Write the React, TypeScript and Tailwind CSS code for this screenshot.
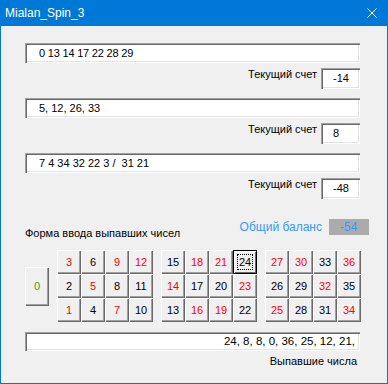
import React from 'react'

const RED = new Set([1, 3, 5, 7, 9, 12, 14, 16, 18, 19, 21, 23, 25, 27, 30, 32, 34, 36])

// three blocks of the roulette table, each 3 rows x 4 columns
const groups: number[][][] = [
  [
    [3, 6, 9, 12],
    [2, 5, 8, 11],
    [1, 4, 7, 10],
  ],
  [
    [15, 18, 21, 24],
    [14, 17, 20, 23],
    [13, 16, 19, 22],
  ],
  [
    [27, 30, 33, 36],
    [26, 29, 32, 35],
    [25, 28, 31, 34],
  ],
]

const bevel =
  'shadow-[inset_1px_1px_0_#ffffff,inset_-1px_-1px_0_#696969,inset_-2px_-2px_0_#a0a0a0]'
const sunken =
  'shadow-[inset_1px_1px_0_#a0a0a0,inset_2px_2px_0_#696969,inset_-1px_-1px_0_#ffffff,inset_-2px_-2px_0_#e3e3e3]'

function NumButton({ n }: { n: number }) {
  const focused = n === 24
  return (
    <div
      className={`relative w-[24px] h-[24px] flex items-center justify-center bg-[#f0f0f0] ${
        focused ? 'border border-black shadow-[inset_1px_1px_0_#ffffff,inset_-1px_-1px_0_#696969]' : bevel
      } ${RED.has(n) ? 'text-[#ff0000]' : 'text-black'}`}
    >
      {focused && <div className="absolute inset-[3px] border border-dotted border-black" />}
      <span className="relative">{n}</span>
    </div>
  )
}

function ScoreBlock({ numbers, score, tight }: { numbers: string; score: string; tight?: boolean }) {
  return (
    <>
      <div className={`h-[20px] w-[335px] bg-white ${sunken} flex items-center pl-[14px] whitespace-pre`}>
        <span className={tight ? 'tracking-[-0.2px]' : ''}>{numbers}</span>
      </div>
      <div className="w-[335px] flex justify-end items-start gap-[4px] mt-[5px]">
        <span className="leading-[12px]">Текущий счет</span>
        <div className={`w-[39px] h-[21px] bg-white ${sunken} flex items-center pl-[12px]`}>{score}</div>
      </div>
    </>
  )
}

export default function App() {
  return (
    <div className="w-[388px] h-[384px] flex flex-col text-[11px] text-black font-['Liberation_Sans',Arial,sans-serif]">
      {/* title bar */}
      <div className="h-[26px] bg-[#0078d7] flex items-center justify-between pl-[5px] pr-[11px] text-white">
        <span className="text-[12px]">Mialan_Spin_3</span>
        <svg width="10" height="10" viewBox="0 0 10 10" className="block">
          <path d="M0.5 0.5 L9.5 9.5 M9.5 0.5 L0.5 9.5" stroke="white" strokeWidth="1" />
        </svg>
      </div>

      <div className="flex-1 bg-[#f0f0f0] border-x border-b border-[#0078d7] pl-[24px] pt-[17px] flex flex-col">
        <ScoreBlock numbers="0 13 14 17 22 28 29" score="-14" tight />
        <div className="mt-[9px]" />
        <ScoreBlock numbers="5, 12, 26, 33" score="8" />
        <div className="mt-[9px]" />
        <ScoreBlock numbers="7 4 34 32 22 3 /  31 21" score="-48" />

        {/* balance + form caption */}
        <div className="mt-[19px] w-[344px] h-[22px] flex justify-between">
          <span className="self-end leading-[13px]">Форма ввода выпавших чисел</span>
          <div className="self-start flex items-center gap-[7px]">
            <span className="text-[#3399ff] text-[12px]">Общий баланс</span>
            <div className="w-[40px] h-[16px] bg-[#ababab] text-[#3399ff] text-[12px] flex items-center pl-[11px]">
              -54
            </div>
          </div>
        </div>

        {/* number pad */}
        <div className="mt-[10px] flex items-center gap-[8px]">
          <div className={`w-[24px] h-[39px] bg-[#f0f0f0] ${bevel} flex items-center justify-center text-[#3c9c1c]`}>
            0
          </div>
          {groups.map((g, gi) => (
            <div key={gi} className="flex flex-col">
              {g.map((row, ri) => (
                <div key={ri} className="flex">
                  {row.map((n) => (
                    <NumButton key={n} n={n} />
                  ))}
                </div>
              ))}
            </div>
          ))}
        </div>

        {/* drawn numbers */}
        <div className={`mt-[10px] h-[19px] w-[335px] bg-white ${sunken} flex items-center justify-end pr-[5px] text-[11.5px]`}>
          24, 8, 8, 0, 36, 25, 12, 21,
        </div>
        <div className="w-[335px] flex justify-end pr-[3px] mt-[4px] leading-[13px]">Выпавшие числа</div>
      </div>
    </div>
  )
}
